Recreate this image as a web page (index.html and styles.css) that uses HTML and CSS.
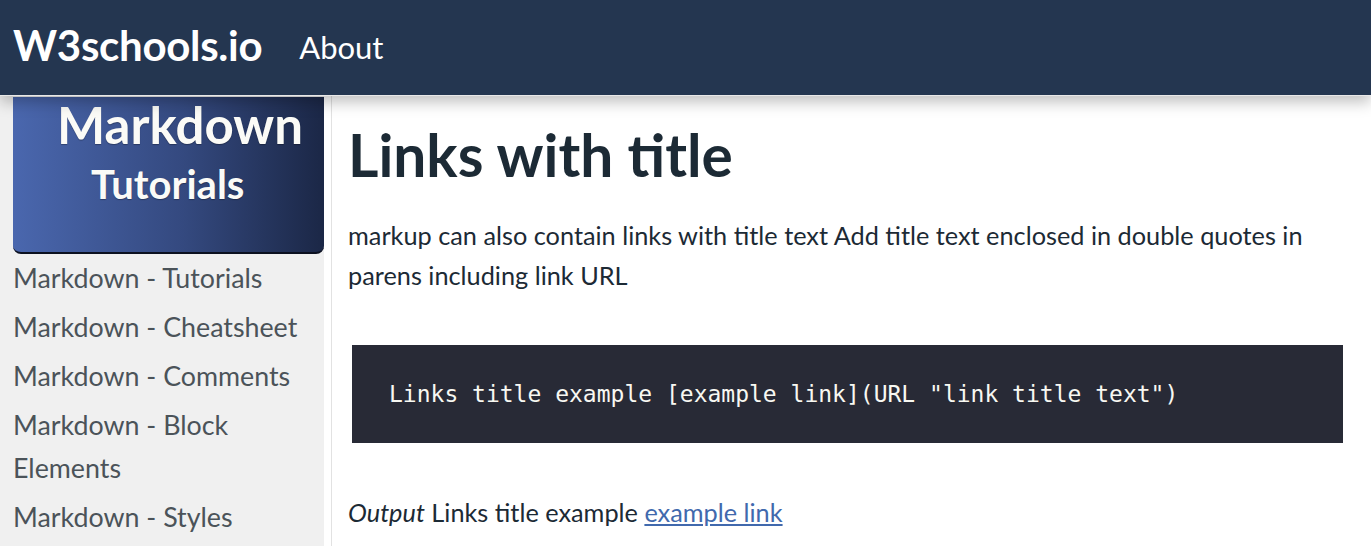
FILE: index.html
```html
<!DOCTYPE html>
<html lang="en">
<head>
<meta charset="utf-8">
<title>Links with title</title>
<link rel="stylesheet" href="styles.css">
</head>
<body>
<header class="topbar">
  <a class="brand" href="#">W3schools.io</a>
  <a class="nav-link" href="#">About</a>
</header>
<div class="layout">
  <aside class="sidebar">
    <div class="banner">
      <span class="banner-title">Markdown</span>
      <span class="banner-sub">Tutorials</span>
    </div>
    <nav class="side-nav">
      <a href="#">Markdown - Tutorials</a>
      <a href="#">Markdown - Cheatsheet</a>
      <a href="#">Markdown - Comments</a>
      <a href="#">Markdown - Block Elements</a>
      <a href="#">Markdown - Styles</a>
    </nav>
  </aside>
  <main class="content">
    <h1>Links with title</h1>
    <p class="lead">markup can also contain links with title text Add title text enclosed in double quotes in parens including link URL</p>
    <pre class="code">Links title example [example link](URL "link title text")</pre>
    <p class="output"><em>Output</em> Links title example <a href="#">example link</a></p>
  </main>
</div>
</body>
</html>
```
FILE: styles.css
```css
* { box-sizing: border-box; }
html, body { margin: 0; padding: 0; }
body {
  font-family: Lato, "Noto Sans", sans-serif;
  background: #fff;
  color: #1c2a35;
  height: 546px;
  overflow: hidden;
}
.topbar {
  position: relative;
  z-index: 2;
  height: 96px;
  background: #243650;
  display: flex;
  align-items: center;
  padding: 0 13px 6px;
  gap: 37px;
  box-shadow: 0 6px 14px rgba(0,0,0,0.25);
  border-bottom: 1px solid #e8e8e8;
}
.brand {
  color: #fff;
  text-decoration: none;
  font-weight: 700;
  font-size: 42px;
  letter-spacing: -0.3px;
}
.nav-link {
  color: #fff;
  text-decoration: none;
  font-size: 31px;
  margin-top: 4px;
}
.layout {
  display: flex;
  align-items: stretch;
  height: 450px;
}
.sidebar {
  width: 332px;
  flex: none;
  border-right: 1px solid #e2e2e2;
  background: linear-gradient(to right, #f0f0f0 324px, #fff 324px);
  padding-top: 1px;
}
.banner {
  margin-left: 13px;
  width: 311px;
  height: 157px;
  background: linear-gradient(to right, #4a67ae, #34497f 55%, #1b2746);
  border-radius: 0 0 8px 8px;
  border-bottom: 2px solid #0c1120;
  display: flex;
  flex-direction: column;
  align-items: flex-start;
  color: #fbfbf7;
  font-weight: 700;
  text-shadow: 0 1px 1px rgba(0,0,0,0.3);
}
.banner-title {
  font-size: 51px;
  line-height: 56px;
  margin-left: 44px;
}
.banner-sub {
  font-size: 40px;
  line-height: 63px;
  margin-left: 78px;
}
.side-nav {
  display: flex;
  flex-direction: column;
  padding: 3px 0 0 13px;
  width: 311px;
}
.side-nav a {
  color: #4b5359;
  text-decoration: none;
  font-size: 26.8px;
  line-height: 43px;
  padding: 0 0 6px;
}
.content {
  flex: 1;
  padding: 12px 28px 0 16px;
}
h1 {
  margin: 12px 0 27px;
  font-size: 58.6px;
  line-height: 68px;
  font-weight: 700;
  color: #1c2a35;
}
.lead {
  margin: 0 0 50px;
  font-size: 25.3px;
  line-height: 40px;
  color: #1c2a35;
}
.code {
  margin: 0 0 0 4px;
  background: #282a36;
  color: #f8f8f2;
  font-family: "DejaVu Sans Mono", "Liberation Mono", monospace;
  font-size: 23px;
  line-height: 30px;
  padding: 34px 37px;
  height: 98px;
}
.output {
  margin: 49px 0 0;
  font-size: 25.3px;
  line-height: 40px;
}
.output em { font-style: italic; }
.output a { color: #4169ad; }
```
